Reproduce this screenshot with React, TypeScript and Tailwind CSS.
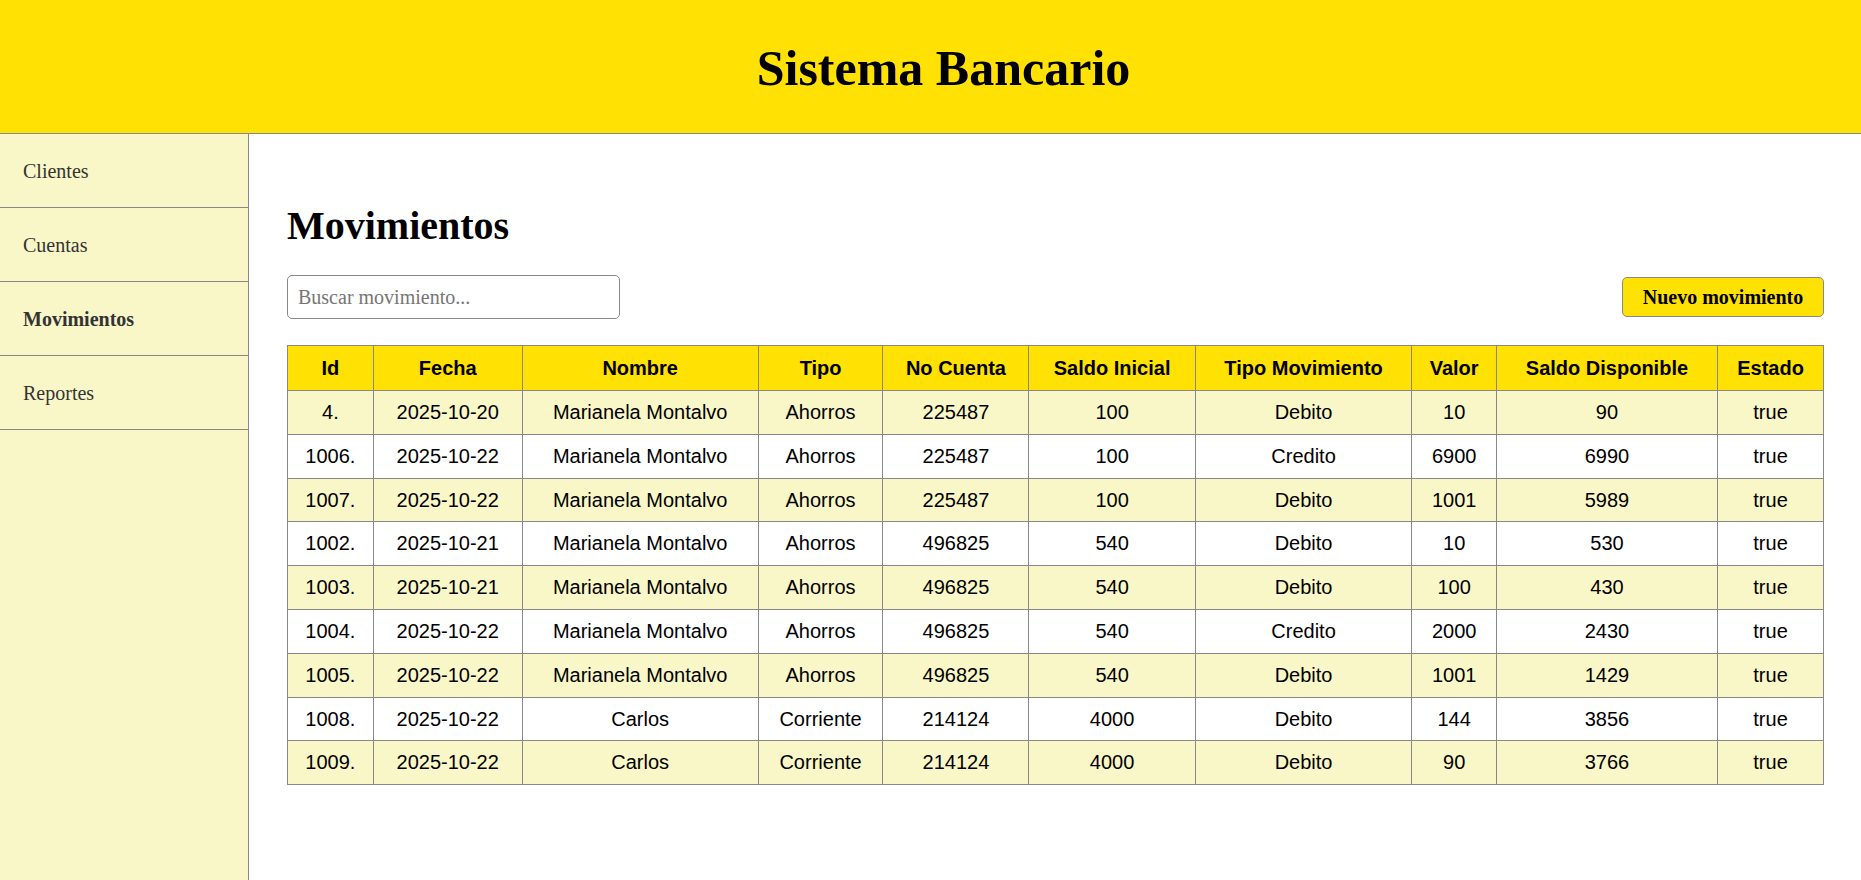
import { useState } from "react"

type Movimiento = {
  id: number
  fecha: string
  nombre: string
  tipo: string
  cuenta: string
  saldoInicial: number
  tipoMov: string
  valor: number
  saldo: number
  estado: boolean
}

const movimientos: Movimiento[] = [
  { id: 4, fecha: "2025-10-20", nombre: "Marianela Montalvo", tipo: "Ahorros", cuenta: "225487", saldoInicial: 100, tipoMov: "Debito", valor: 10, saldo: 90, estado: true },
  { id: 1006, fecha: "2025-10-22", nombre: "Marianela Montalvo", tipo: "Ahorros", cuenta: "225487", saldoInicial: 100, tipoMov: "Credito", valor: 6900, saldo: 6990, estado: true },
  { id: 1007, fecha: "2025-10-22", nombre: "Marianela Montalvo", tipo: "Ahorros", cuenta: "225487", saldoInicial: 100, tipoMov: "Debito", valor: 1001, saldo: 5989, estado: true },
  { id: 1002, fecha: "2025-10-21", nombre: "Marianela Montalvo", tipo: "Ahorros", cuenta: "496825", saldoInicial: 540, tipoMov: "Debito", valor: 10, saldo: 530, estado: true },
  { id: 1003, fecha: "2025-10-21", nombre: "Marianela Montalvo", tipo: "Ahorros", cuenta: "496825", saldoInicial: 540, tipoMov: "Debito", valor: 100, saldo: 430, estado: true },
  { id: 1004, fecha: "2025-10-22", nombre: "Marianela Montalvo", tipo: "Ahorros", cuenta: "496825", saldoInicial: 540, tipoMov: "Credito", valor: 2000, saldo: 2430, estado: true },
  { id: 1005, fecha: "2025-10-22", nombre: "Marianela Montalvo", tipo: "Ahorros", cuenta: "496825", saldoInicial: 540, tipoMov: "Debito", valor: 1001, saldo: 1429, estado: true },
  { id: 1008, fecha: "2025-10-22", nombre: "Carlos", tipo: "Corriente", cuenta: "214124", saldoInicial: 4000, tipoMov: "Debito", valor: 144, saldo: 3856, estado: true },
  { id: 1009, fecha: "2025-10-22", nombre: "Carlos", tipo: "Corriente", cuenta: "214124", saldoInicial: 4000, tipoMov: "Debito", valor: 90, saldo: 3766, estado: true },
]

const navItems = ["Clientes", "Cuentas", "Movimientos", "Reportes"]

const headers = ["Id", "Fecha", "Nombre", "Tipo", "No Cuenta", "Saldo Inicial", "Tipo Movimiento", "Valor", "Saldo Disponible", "Estado"]

export default function App() {
  const [query, setQuery] = useState("")
  const active = "Movimientos"

  const filtered = movimientos.filter(m =>
    `${m.id} ${m.fecha} ${m.nombre} ${m.tipo} ${m.cuenta} ${m.tipoMov}`.toLowerCase().includes(query.toLowerCase())
  )

  const tdCls = "border border-[#888888] px-[10px] py-[10px] text-center"

  return (
    <div className="min-h-screen flex flex-col bg-white font-['Liberation_Serif',serif] text-black">
      <header className="h-[134px] shrink-0 bg-[#ffe203] border-b border-[#888888] flex items-center justify-center pl-[26px]">
        <h1 className="text-[50px] font-bold leading-none m-0 mt-[2px]">Sistema Bancario</h1>
      </header>

      <div className="flex flex-1">
        <aside className="w-[249px] shrink-0 bg-[#f9f7c8] border-r border-[#888888] min-h-[746px]">
          {navItems.map(item => (
            <div
              key={item}
              className={`h-[74px] flex items-center px-[23px] border-b border-[#888888] text-[20px] text-[#333333] ${item === active ? "font-bold" : ""}`}
            >
              {item}
            </div>
          ))}
        </aside>

        <main className="flex-1 pl-[38px] pr-[37px] pt-[70px]">
          <h2 className="text-[40px] leading-[44px] font-bold m-0">Movimientos</h2>

          <div className="mt-[27px] h-[44px] flex items-center justify-between">
            <input
              value={query}
              onChange={e => setQuery(e.target.value)}
              placeholder="Buscar movimiento..."
              className="w-[333px] h-[44px] border border-[#888888] rounded-[5px] px-[10px] text-[20px] placeholder:text-[#757575] outline-none font-['Liberation_Serif',serif]"
            />
            <button className="w-[202px] h-[40px] bg-[#ffe203] border border-[#888888] rounded-[5px] text-[20px] font-bold font-['Liberation_Serif',serif]">
              Nuevo movimiento
            </button>
          </div>

          <table className="mt-[26px] w-full border-collapse font-['Liberation_Sans',Arial,sans-serif] text-[20px] leading-[22.8px]">
            <thead>
              <tr className="bg-[#ffe203]">
                {headers.map(h => (
                  <th key={h} className={`${tdCls} font-bold leading-[24px]`}>{h}</th>
                ))}
              </tr>
            </thead>
            <tbody>
              {filtered.map((m, i) => (
                <tr key={m.id} className={i % 2 === 0 ? "bg-[#f9f7c8]" : "bg-white"}>
                  <td className={tdCls}>{m.id}.</td>
                  <td className={tdCls}>{m.fecha}</td>
                  <td className={tdCls}>{m.nombre}</td>
                  <td className={tdCls}>{m.tipo}</td>
                  <td className={tdCls}>{m.cuenta}</td>
                  <td className={tdCls}>{m.saldoInicial}</td>
                  <td className={tdCls}>{m.tipoMov}</td>
                  <td className={tdCls}>{m.valor}</td>
                  <td className={tdCls}>{m.saldo}</td>
                  <td className={tdCls}>{String(m.estado)}</td>
                </tr>
              ))}
            </tbody>
          </table>
        </main>
      </div>
    </div>
  )
}
